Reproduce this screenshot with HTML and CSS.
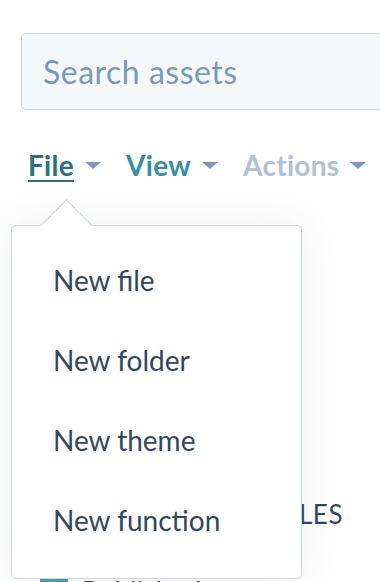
FILE: index.html
```html
<!DOCTYPE html>
<html>
<head>
<meta charset="utf-8">
<link rel="stylesheet" href="styles.css">
</head>
<body>
<div class="page">
  <div class="search"><span class="placeholder">Search assets</span></div>
  <nav class="menubar">
    <div class="menu active"><span class="label">File</span><span class="caret"></span></div>
    <div class="menu view"><span class="label">View</span><span class="caret"></span></div>
    <div class="menu disabled"><span class="label">Actions</span><span class="caret"></span></div>
  </nav>
  <div class="content">
    <div class="section-title">DEVELOPER FILES</div>
    <div class="row"><span class="box"></span><span class="row-text">Published</span></div>
  </div>
  <div class="dropdown">
    <ul class="items">
      <li>New file</li>
      <li>New folder</li>
      <li>New theme</li>
      <li>New function</li>
    </ul>
  </div>
</div>
</body>
</html>
```
FILE: styles.css
```css
html, body {
  margin: 0;
  padding: 0;
  background: #ffffff;
  overflow: hidden;
}
.page {
  position: relative;
  width: 380px;
  height: 582px;
  overflow: hidden;
  font-family: Lato, "Open Sans", sans-serif;
}
.search {
  margin: 33px -30px 0 21px;
  height: 75px;
  border: 1.5px solid #cbd6e2;
  border-radius: 5px;
  background: #f5f8fa;
  display: flex;
  align-items: center;
  padding-left: 21px;
}
.placeholder {
  font-size: 32px;
  color: #7c98b6;
  letter-spacing: 0.5px;
}
.menubar {
  display: flex;
  align-items: center;
  margin-top: 38px;
  padding-left: 28px;
  height: 34px;
}
.menu {
  display: flex;
  align-items: center;
  margin-right: 25px;
  font-size: 28px;
  font-weight: 700;
}
.menu .label {
  line-height: 34px;
  letter-spacing: 0.3px;
}
.menu.active .label {
  color: #2d6f80;
  text-decoration: underline;
  text-decoration-thickness: 2px;
  text-underline-offset: 4px;
}
.menu.view .label { color: #3a8da4; }
.menu.disabled .label { color: #b0c1d4; }
.caret {
  width: 0;
  height: 0;
  margin-left: 11px;
  border-left: 8.5px solid transparent;
  border-right: 8.5px solid transparent;
  border-top: 7px solid #7c98b6;
}
.content {
  padding: 316px 0 0 40px;
}
.section-title {
  width: 303px;
  text-align: right;
  font-size: 26px;
  line-height: 32px;
  color: #33475b;
  letter-spacing: 0.5px;
  white-space: nowrap;
}
.row {
  display: flex;
  align-items: flex-start;
  margin-top: 43px;
}
.box {
  width: 28px;
  height: 28px;
  background: #4a9db2;
  border-radius: 2px;
}
.row-text {
  margin-left: 14px;
  margin-top: 4px;
  font-size: 28px;
  line-height: 28px;
  color: #33475b;
}
.dropdown {
  position: absolute;
  left: 11px;
  top: 225px;
  width: 289px;
  height: 352px;
  background: #ffffff;
  border: 1.5px solid #cbd6e2;
  border-radius: 5px;
  box-shadow: 0 0 40px rgba(45, 62, 80, 0.08);
}
.dropdown::before {
  content: "";
  position: absolute;
  left: 36px;
  top: -19px;
  width: 36px;
  height: 36px;
  background: #ffffff;
  border-left: 1.5px solid #cbd6e2;
  border-top: 1.5px solid #cbd6e2;
  transform: rotate(45deg);
}
.items {
  list-style: none;
  margin: 0;
  padding: 14px 0 0 0;
  position: relative;
}
.items li {
  height: 80px;
  line-height: 80px;
  padding-left: 41px;
  font-size: 28px;
  color: #33475b;
}
```
